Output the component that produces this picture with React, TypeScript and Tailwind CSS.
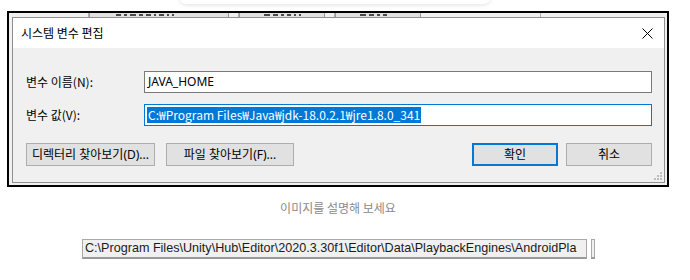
import React from 'react';

const ui = { fontFamily: '"Noto Sans", "Noto Sans CJK KR", sans-serif' };
const kr = { fontFamily: '"Noto Sans CJK KR", "Noto Sans", sans-serif' };

function WinButton({ label, primary, className }: { label: string; primary?: boolean; className: string }) {
  return (
    <div
      className={`h-[23px] flex items-center justify-center bg-[#e1e1e1] text-[12px] text-black ${
        primary ? 'border-2 border-[#0078d7]' : 'border border-[#adadad]'
      } ${className}`}
    >
      {label}
    </div>
  );
}

// clipped bottoms of the glyphs from the window behind the dialog
function Ticks({ offsets }: { offsets: number[] }) {
  return (
    <div className="flex items-start gap-[1px] h-full">
      {offsets.map((w, i) => (
        <span key={i} className="h-[2px] bg-[#4a4a4a]" style={{ width: w, marginLeft: i === 0 ? 0 : 2 }} />
      ))}
    </div>
  );
}

export default function App() {
  return (
    <div className="relative w-[690px] h-[280px] bg-white overflow-hidden" style={ui}>
      {/* faint tooltip shadow above the frame */}
      <div className="absolute left-[180px] top-[-14px] w-[310px] h-[18px] rounded-md bg-white shadow-[0_1px_4px_rgba(0,0,0,0.12)]" />

      {/* screenshot frame */}
      <div className="relative ml-[7px] mt-[11px] w-[662px] h-[176px] border-2 border-black bg-[#f0f0f0] pl-[3px] pt-[4px]">
        {/* background window peeking through */}
        <div className="absolute left-0 top-0 w-full h-[4px] flex">
          <div className="w-[80px] border-r border-[#b0b0b0]" />
          <div className="w-[140px] border-x border-[#9a9a9a] bg-[#e1e1e1] pl-[26px] pt-[1px]">
            <Ticks offsets={[5, 3, 6, 4, 5, 2, 5, 2, 2]} />
          </div>
          <div className="w-[10px] border-r border-[#b0b0b0]" />
          <div className="w-[86px] border-x border-[#9a9a9a] bg-[#e1e1e1] pl-[24px] pt-[1px]">
            <Ticks offsets={[6, 5, 3, 4, 2, 2]} />
          </div>
          <div className="w-[10px] border-r border-[#b0b0b0]" />
          <div className="w-[86px] border-x border-[#9a9a9a] bg-[#e1e1e1] pl-[24px] pt-[1px]">
            <Ticks offsets={[6, 5, 3, 4]} />
          </div>
          <div className="w-[120px] border-r border-[#b0b0b0]" />
        </div>

        {/* dialog */}
        <div className="relative w-[653px] h-[166px] border border-[#8f8f8f] bg-[#f0f0f0] flex flex-col">
          <div className="h-[30px] bg-white flex items-center justify-between pl-[8px] pr-[10px]">
            <span className="text-[12px] text-black" style={kr}>시스템 변수 편집</span>
            <svg width="11" height="11" viewBox="0 0 11 11" className="mr-[1px]">
              <path d="M0.5 0.5 L10.5 10.5 M10.5 0.5 L0.5 10.5" stroke="#000" strokeWidth="1" />
            </svg>
          </div>

          <div className="flex flex-col pl-[13px] pr-[12px] pt-[23px]">
            <div className="flex items-center h-[22px]">
              <span className="w-[118px] text-[12px] text-black" style={kr}>변수 이름(N):</span>
              <div className="flex-1 h-[22px] border border-[#7a7a7a] bg-white flex items-center pl-[3px] text-[12px] text-black">
                JAVA_HOME
              </div>
            </div>
            <div className="flex items-center h-[22px] mt-[11px]">
              <span className="w-[118px] text-[12px] text-black" style={kr}>변수 값(V):</span>
              <div className="flex-1 h-[22px] border border-[#0078d7] bg-white flex items-center pl-[2px]">
                <span className="bg-[#0078d7] text-white text-[12px] leading-[16px] px-[1px]" style={kr}>
                  C:₩Program Files₩Java₩jdk-18.0.2.1₩jre1.8.0_341
                </span>
              </div>
            </div>

            <div className="flex items-center mt-[17px]">
              <WinButton label="디렉터리 찾아보기(D)..." className="w-[129px]" />
              <WinButton label="파일 찾아보기(F)..." className="w-[128px] ml-[11px]" />
              <WinButton label="확인" primary className="w-[86px] ml-auto" />
              <WinButton label="취소" className="w-[86px] ml-[8px]" />
            </div>
          </div>

          {/* resize grip */}
          <div className="absolute right-[2px] bottom-[2px] grid grid-cols-3 gap-[1px]">
            <span className="w-[2px] h-[2px]" />
            <span className="w-[2px] h-[2px]" />
            <span className="w-[2px] h-[2px] bg-[#bcbcbc]" />
            <span className="w-[2px] h-[2px]" />
            <span className="w-[2px] h-[2px] bg-[#bcbcbc]" />
            <span className="w-[2px] h-[2px] bg-[#bcbcbc]" />
            <span className="w-[2px] h-[2px] bg-[#bcbcbc]" />
            <span className="w-[2px] h-[2px] bg-[#bcbcbc]" />
            <span className="w-[2px] h-[2px] bg-[#bcbcbc]" />
          </div>
        </div>
      </div>

      {/* caption */}
      <div className="w-[676px] text-center mt-[12px] text-[12px] text-[#8a8a8a]" style={kr}>
        이미지를 설명해 보세요
      </div>

      {/* path bar */}
      <div className="flex items-stretch ml-[82px] mt-[22px] h-[20px]">
        <div
          className="w-[505px] overflow-hidden whitespace-nowrap bg-[#f0f0f0] border border-[#a8a8a8] border-b-2 border-b-[#9a9a9a] pl-[2px] text-[12.6px] leading-[17px] text-[#1a1a1a]"
          style={{ fontFamily: '"Liberation Sans", Arial, sans-serif' }}
        >
          C:\Program Files\Unity\Hub\Editor\2020.3.30f1\Editor\Data\PlaybackEngines\AndroidPla
        </div>
        <div className="w-[4px] ml-[4px] bg-[#f0f0f0] border border-[#a8a8a8] border-b-2 border-b-[#9a9a9a]" />
      </div>
    </div>
  );
}
